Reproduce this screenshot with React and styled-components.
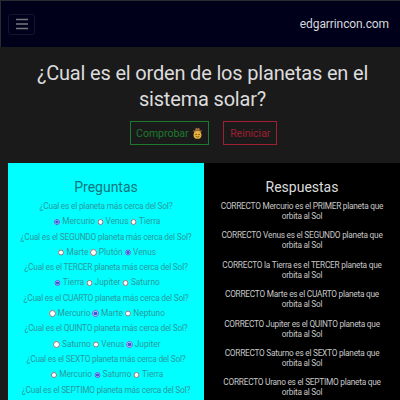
import React from "react";
import styled, { createGlobalStyle } from "styled-components";

const questions = [
  { text: "¿Cual es el planeta más cerca del Sol?", options: ["Mercurio", "Venus", "Tierra"], picked: 0 },
  { text: "¿Cual es el SEGUNDO planeta más cerca del Sol?", options: ["Marte", "Plutón", "Venus"], picked: 2 },
  { text: "¿Cual es el TERCER planeta más cerca del Sol?", options: ["Tierra", "Jupiter", "Saturno"], picked: 0 },
  { text: "¿Cual es el CUARTO planeta más cerca del Sol?", options: ["Mercurio", "Marte", "Neptuno"], picked: 1 },
  { text: "¿Cual es el QUINTO planeta más cerca del Sol?", options: ["Saturno", "Venus", "Jupiter"], picked: 2 },
  { text: "¿Cual es el SEXTO planeta más cerca del Sol?", options: ["Mercurio", "Saturno", "Tierra"], picked: 1 },
  { text: "¿Cual es el SEPTIMO planeta más cerca del Sol?", options: [], picked: -1 },
];

const answers = [
  "CORRECTO Mercurio es el PRIMER planeta que orbita al Sol",
  "CORRECTO Venus es el SEGUNDO planeta que orbita al Sol",
  "CORRECTO la Tierra es el TERCER planeta que orbita al Sol",
  "CORRECTO Marte es el CUARTO planeta que orbita al Sol",
  "CORRECTO Jupiter es el QUINTO planeta que orbita al Sol",
  "CORRECTO Saturno es el SEXTO planeta que orbita al Sol",
  "CORRECTO Urano es el SEPTIMO planeta que orbita al Sol",
];

export default function App() {
  return (
    <Page>
      <GlobalStyle />
      <Navbar>
        <MenuButton aria-label="menu">
          <svg width="14" height="12" viewBox="0 0 14 12">
            <path d="M1 1.5h12M1 6h12M1 10.5h12" stroke="#77777f" strokeWidth="1.4" />
          </svg>
        </MenuButton>
        <Brand>edgarrincon.com</Brand>
      </Navbar>
      <Hero>
        <Title>¿Cual es el orden de los planetas en el sistema solar?</Title>
        <Actions>
          <ActionButton $color="#1c7a2f" $pad={5.5}>
            Comprobar
            <svg width="11" height="13" viewBox="0 0 12 14">
              <path d="M3.5 4 4 .8l2 .7 2-.7L8.500 4z" fill="#a8703a" />
              <path d="M.8 3.600h10.400L9.500 5.500h-7z" fill="#a8703a" />
              <circle cx="6" cy="8.500" r="4.300" fill="#e8b23c" />
              <circle cx="4.400" cy="8" r=".7" fill="#4a3210" />
              <circle cx="7.600" cy="8" r=".7" fill="#4a3210" />
              <path d="M4 10.200q2 1.500 4 0" stroke="#4a3210" strokeWidth=".7" fill="none" />
            </svg>
          </ActionButton>
          <ActionButton $color="#a01f33" $pad={6}>Reiniciar</ActionButton>
        </Actions>
      </Hero>
      <Columns>
        <QuestionPanel>
          <PanelTitle $color="#10757d" $gap={3}>Preguntas</PanelTitle>
          {questions.map((q, i) => (
            <div key={q.text}>
              <Question>{q.text}</Question>
              <Options>
                {q.options.map((opt, j) => (
                  <Option key={opt}>
                    <input type="radio" name={`q${i}`} defaultChecked={j === q.picked} />
                    {opt}
                  </Option>
                ))}
              </Options>
            </div>
          ))}
        </QuestionPanel>
        <AnswerPanel>
          <PanelTitle $color="#dcdcdc" $gap={5}>Respuestas</PanelTitle>
          {answers.map((a) => (
            <Answer key={a}>{a}</Answer>
          ))}
        </AnswerPanel>
      </Columns>
    </Page>
  );
}

const GlobalStyle = createGlobalStyle`
  html, body {
    margin: 0;
    height: 400px;
    overflow: hidden;
    background: #1a1a1a;
  }
`;

const Page = styled.div`
  width: 400px;
  height: 400px;
  overflow: hidden;
  font-family: Roboto, "Liberation Sans", sans-serif;
`;

const Navbar = styled.nav`
  height: 46px;
  display: flex;
  align-items: center;
  justify-content: space-between;
  padding: 0 11px 0 7px;
  background: #00001a;
  border-top: 1px solid #2a2a30;
  border-left: 1px solid #2a2a30;
`;

const MenuButton = styled.button`
  width: 27px;
  height: 21px;
  display: flex;
  align-items: center;
  justify-content: center;
  padding: 0;
  background: none;
  border: 1px solid #14142a;
  border-radius: 3px;
`;

const Brand = styled.span`
  color: #d8d8dc;
  font-size: 12px;
  letter-spacing: -0.1px;
`;

const Hero = styled.header`
  height: 116px;
  box-sizing: border-box;
  padding-top: 13px;
  text-align: center;
  background: #1a1a1a;
`;

const Title = styled.h1`
  margin: 0 auto;
  width: 350px;
  padding-left: 5px;
  color: #dcdcdc;
  font-size: 20px;
  font-weight: 400;
  line-height: 26px;
  letter-spacing: -0.18px;
`;

const Actions = styled.div`
  display: flex;
  justify-content: center;
  gap: 14px;
  margin-top: 9px;
  padding-left: 7px;
`;

const ActionButton = styled.button`
  height: 24px;
  display: flex;
  align-items: center;
  gap: 3px;
  padding: 0 ${(p) => p.$pad}px;
  background: none;
  border: 1px solid ${(p) => p.$color};
  color: ${(p) => p.$color};
  font-family: inherit;
  font-size: 10.5px;
`;

const Columns = styled.div`
  display: grid;
  grid-template-columns: 196px 196px;
  margin-left: 8px;
  text-align: center;
`;

const QuestionPanel = styled.section`
  background: #00ffff;
  color: #2a9aa0;
  height: 240px;
  padding-top: 16px;
  box-sizing: border-box;
`;

const AnswerPanel = styled.section`
  background: #000;
  color: #c8c8c8;
  height: 240px;
  padding: 16px 16px 0;
  box-sizing: border-box;
`;

const PanelTitle = styled.h2`
  margin: 0 0 ${(p) => p.$gap}px;
  font-size: 14px;
  font-weight: 400;
  line-height: 17px;
  color: ${(p) => p.$color};
`;

const Question = styled.p`
  margin: 0;
  font-size: 8.3px;
  line-height: 15.3px;
  letter-spacing: -0.2px;
`;

const Options = styled.div`
  display: flex;
  justify-content: center;
  font-size: 8.3px;
  line-height: 15.3px;
`;

const Option = styled.label`
  display: flex;
  align-items: center;
  gap: 2px;

  input {
    width: 6.5px;
    height: 6.5px;
    margin: 0 0 0 2px;
    accent-color: #3b5bdb;
  }
`;

const Answer = styled.p`
  margin: 0 0 9.4px;
  font-size: 8.3px;
  line-height: 10px;
  letter-spacing: -0.25px;
`;
